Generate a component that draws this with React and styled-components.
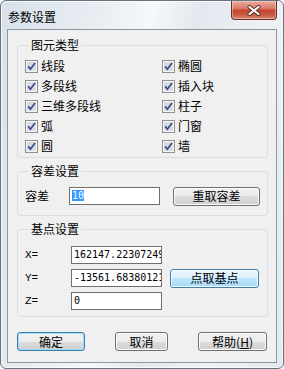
import React from 'react';
import styled, { createGlobalStyle } from 'styled-components';

const GlobalStyle = createGlobalStyle`
  body {
    margin: 0;
    background: #ffffff;
    font-family: "Noto Sans CJK SC", "Liberation Sans", sans-serif;
    font-size: 12px;
    color: #000;
  }
`;

const Window = styled.div`
  box-sizing: border-box;
  width: 284px;
  height: 369px;
  display: flex;
  flex-direction: column;
  padding: 0 6px 5px 6px;
  border: 1px solid #66727f;
  border-radius: 6px;
  background: linear-gradient(100deg, #d8e1ea 0%, #e8edf2 28%, #f6f8fa 44%, #e2e8ee 58%, #eef2f5 78%, #e3e9ef 100%);
  box-shadow: inset 0 0 0 1px rgba(255, 255, 255, 0.7);
`;

const TitleBar = styled.div`
  height: 28px;
  display: flex;
  justify-content: space-between;
  align-items: flex-start;
`;

const Title = styled.span`
  margin-top: 9px;
  padding-left: 1px;
  line-height: 14px;
  font-size: 12px;
  color: #000;
`;

const CloseButton = styled.div`
  box-sizing: border-box;
  width: 46px;
  height: 19px;
  display: flex;
  align-items: center;
  justify-content: center;
  border: 1px solid #6a2f27;
  border-top: none;
  border-radius: 0 0 4px 4px;
  background: linear-gradient(#e9ab9c 0%, #dc7f6c 40%, #c5452e 52%, #c85a42 78%, #dc8b74 100%);
  box-shadow: inset 0 0 0 1px rgba(255, 255, 255, 0.35);
`;

const Client = styled.div`
  flex: 1;
  display: flex;
  flex-direction: column;
  padding: 8px 8px 0 9px;
  border: 1px solid #8d97a2;
  background: #f0f0f0;
`;

const Group = styled.fieldset`
  margin: ${(p) => p.$top || 0}px 0 0 0;
  padding: ${(p) => p.$pad};
  border: 1px solid #d5dfe5;
  border-radius: 3px;
  min-width: 0;
`;

const Legend = styled.legend`
  margin-left: 4px;
  padding: 0 2px;
  line-height: 14px;
  font-size: 12px;
`;

const CheckGrid = styled.div`
  display: grid;
  grid-template-columns: 137px 1fr;
  grid-auto-flow: column;
  grid-template-rows: repeat(5, 20px);
`;

const CheckItem = styled.label`
  display: flex;
  align-items: center;
  gap: 3px;
  line-height: 14px;
`;

const Row = styled.div`
  display: grid;
  grid-template-columns: 44px 104px 87px;
  align-items: center;
  height: 20px;
`;

const CoordGrid = styled.div`
  display: grid;
  grid-template-columns: 46px 99px 89px;
  grid-template-rows: repeat(3, 18px);
  row-gap: 5px;
  align-items: center;
`;

const Label = styled.span`
  font-family: ${(p) => (p.$mono ? '"Liberation Mono", monospace' : 'inherit')};
  font-size: ${(p) => (p.$mono ? '11px' : '12px')};
  line-height: 14px;
`;

const Field = styled.div`
  box-sizing: border-box;
  width: 91px;
  height: 18px;
  padding-left: 2px;
  border: 1px solid #6f6f6f;
  background: #fff;
  font-family: "DejaVu Sans Mono", monospace;
  font-size: 10px;
  line-height: 16px;
  white-space: nowrap;
  overflow: hidden;
`;

const Selected = styled.span`
  background: #3399ff;
  color: #fff;
`;

const Button = styled.button`
  box-sizing: border-box;
  width: ${(p) => p.$w}px;
  height: 19px;
  padding: 0;
  font-family: inherit;
  font-size: 12px;
  line-height: 16px;
  color: #000;
  border-radius: 3px;
  border: 1px solid ${(p) => (p.$kind === 'plain' ? '#707070' : '#3c7fb1')};
  background: ${(p) =>
    p.$kind === 'hot'
      ? 'linear-gradient(#eaf6fd 0%, #d9f0fc 50%, #bee6fd 50%, #a7d9f5 100%)'
      : 'linear-gradient(#f2f2f2 0%, #ebebeb 50%, #dddddd 50%, #cfcfcf 100%)'};
  box-shadow: inset 0 0 0 1px ${(p) => (p.$kind === 'default' ? '#9fdcf6' : '#fcfcfc')};
`;

const Footer = styled.div`
  display: flex;
  justify-content: space-between;
  margin-top: 15px;
  padding-right: 1px;
`;

function CheckBox() {
  return (
    <svg width="13" height="13" viewBox="0 0 13 13">
      <rect x="0.5" y="0.5" width="12" height="12" fill="#f7f7f7" stroke="#8e8f8f" />
      <rect x="2" y="2" width="9" height="9" fill="#d9dbe0" />
      <path d="M3.2 6.4 L5.4 9.2 L10 2.9" fill="none" stroke="#354a8c" strokeWidth="1.7" />
    </svg>
  );
}

const leftItems = ['线段', '多段线', '三维多段线', '弧', '圆'];
const rightItems = ['椭圆', '插入块', '柱子', '门窗', '墙'];

export default function App() {
  return (
    <>
      <GlobalStyle />
      <Window>
        <TitleBar>
          <Title>参数设置</Title>
          <CloseButton>
            <svg width="16" height="11" viewBox="0 0 16 11">
              <path d="M3.5 2 L12.5 9 M12.5 2 L3.5 9" stroke="#5b2a24" strokeWidth="4" strokeLinecap="round" />
              <path d="M3.5 2 L12.5 9 M12.5 2 L3.5 9" stroke="#ffffff" strokeWidth="2.2" strokeLinecap="round" />
            </svg>
          </CloseButton>
        </TitleBar>
        <Client>
          <Group $pad="4px 0 1px 7px">
            <Legend>图元类型</Legend>
            <CheckGrid>
              {[...leftItems, ...rightItems].map((t) => (
                <CheckItem key={t}>
                  <CheckBox />
                  {t}
                </CheckItem>
              ))}
            </CheckGrid>
          </Group>
          <Group $top={6} $pad="8px 0 9px 7px">
            <Legend>容差设置</Legend>
            <Row>
              <Label>容差</Label>
              <Field>
                <Selected>10</Selected>
              </Field>
              <Button $w={87} $kind="plain">重取容差</Button>
            </Row>
          </Group>
          <Group $top={6} $pad="10px 0 6px 7px">
            <Legend>基点设置</Legend>
            <CoordGrid>
              <Label $mono>X=</Label>
              <Field>162147.22307249</Field>
              <span />
              <Label $mono>Y=</Label>
              <Field>-13561.68380121</Field>
              <Button $w={89} $kind="hot">点取基点</Button>
              <Label $mono>Z=</Label>
              <Field>0</Field>
            </CoordGrid>
          </Group>
          <Footer>
            <Button $w={68} $kind="default">确定</Button>
            <Button $w={53} $kind="plain">取消</Button>
            <Button $w={69} $kind="plain">
              帮助(<u>H</u>)
            </Button>
          </Footer>
        </Client>
      </Window>
    </>
  );
}
